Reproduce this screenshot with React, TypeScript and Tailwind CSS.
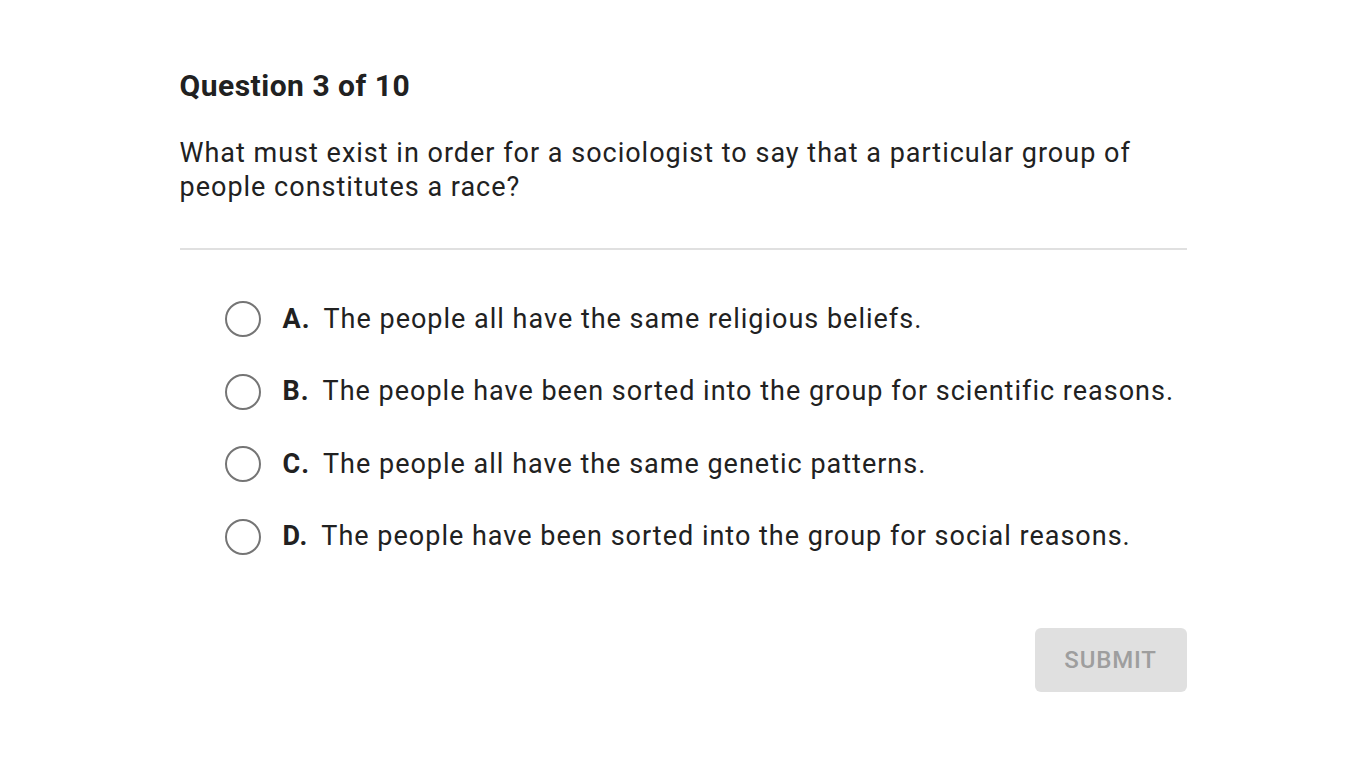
import React from "react";

const options = [
  { l: "A.", t: "The people all have the same religious beliefs." },
  { l: "B.", t: "The people have been sorted into the group for scientific reasons." },
  { l: "C.", t: "The people all have the same genetic patterns." },
  { l: "D.", t: "The people have been sorted into the group for social reasons." },
];

export default function App() {
  return (
    <div className="min-h-screen bg-white text-[#212121]" style={{ fontFamily: "Roboto, 'Noto Sans', sans-serif" }}>
      <div className="mx-auto w-[1007px] pt-[66px]">
        <h1 className="text-[30px] font-bold leading-[40px] tracking-[0.5px]">Question 3 of 10</h1>
        <p className="mt-[30px] text-[27px] leading-[34px] tracking-[1px]">
          What must exist in order for a sociologist to say that a particular group of people constitutes a race?
        </p>
        <div className="mt-[44px] h-[2px] bg-[#e0e0e0]" />
        <div className="mt-[51px] flex flex-col gap-[36.5px] pl-[45px]">
          {options.map((o) => (
            <div key={o.l} className="flex items-center h-[36px]">
              <div className="h-[36px] w-[36px] rounded-full border-2 border-[#757575]" />
              <span className="ml-[22px] text-[27px] font-bold tracking-[1px]">{o.l}</span>
              <span className="ml-[13px] text-[27px] tracking-[1px]">{o.t}</span>
            </div>
          ))}
        </div>
        <div className="mt-[73px] flex justify-end">
          <button className="h-[64px] w-[152px] rounded-[6px] bg-[#e0e0e0] text-[24px] font-medium tracking-[0.8px] text-[#9e9e9e]">
            SUBMIT
          </button>
        </div>
      </div>
    </div>
  );
}
